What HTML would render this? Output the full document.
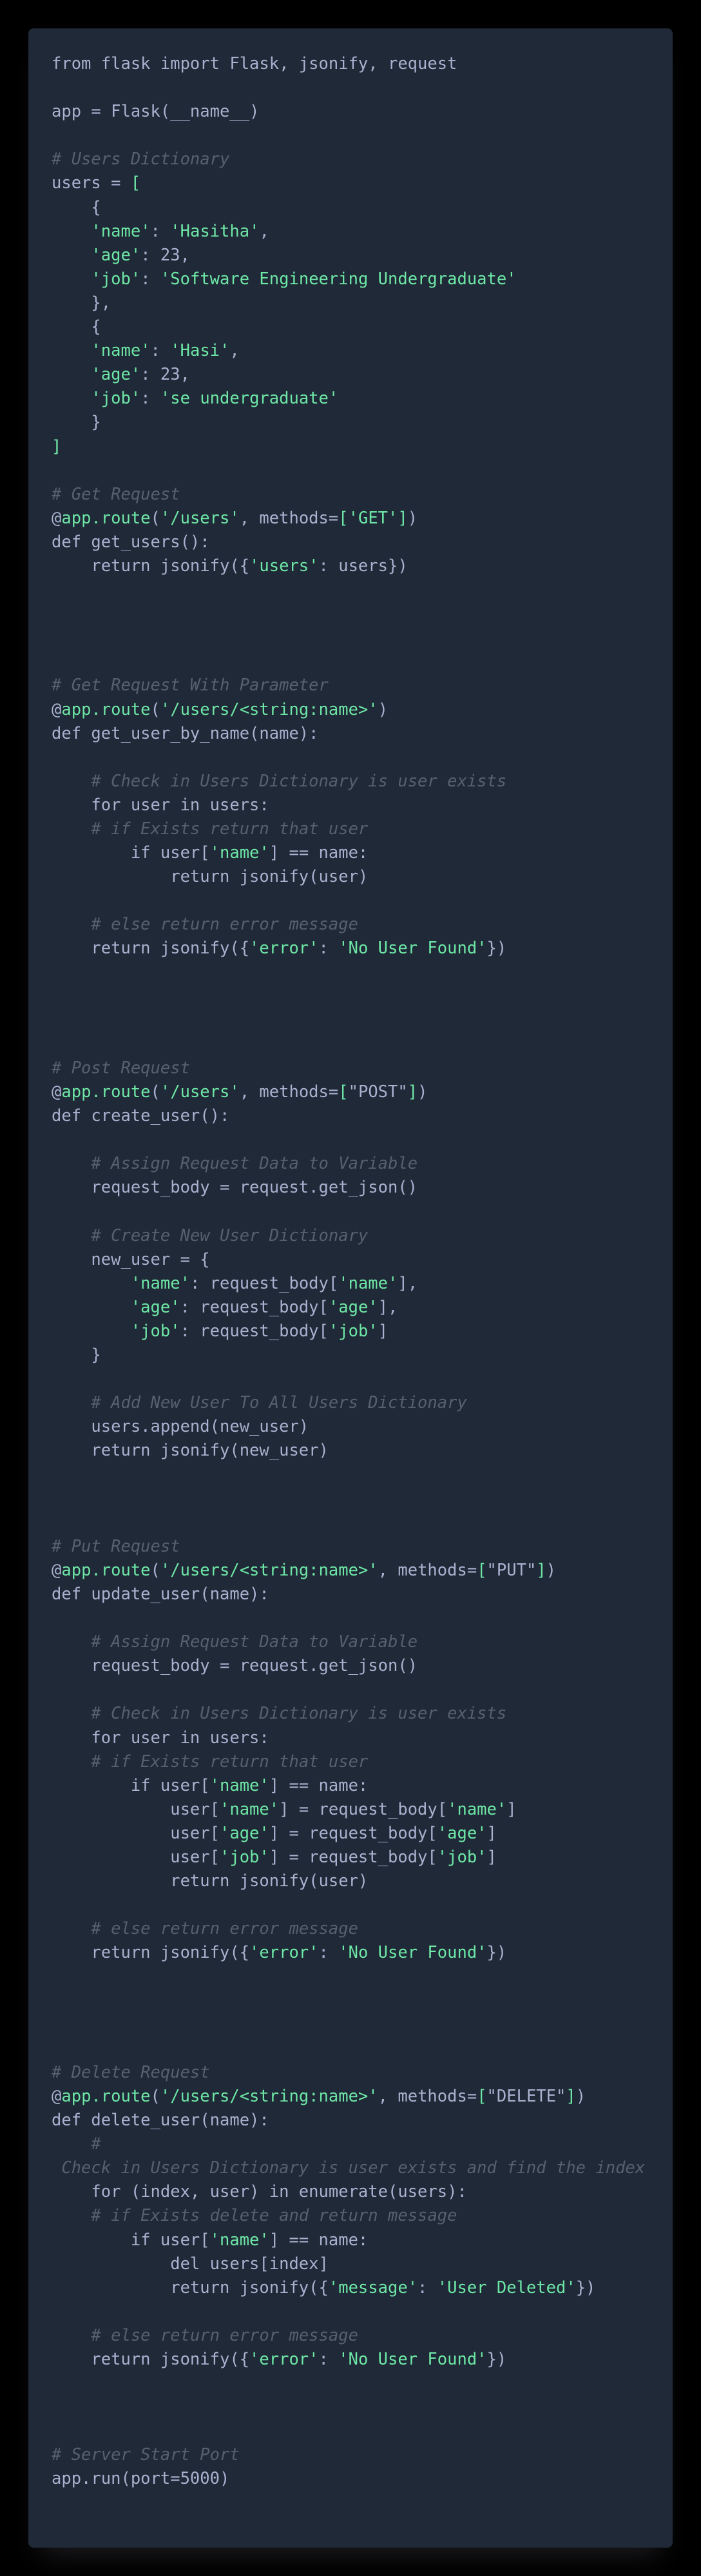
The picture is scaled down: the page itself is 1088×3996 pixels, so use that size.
<!DOCTYPE html>
<html><head><meta charset="utf-8"><style>
html,body{margin:0;padding:0;background:#000;width:1088px;height:3996px;overflow:hidden}
.card{position:absolute;left:44px;top:44px;width:1000px;height:3908px;background:#1f2937;border-radius:8px;box-shadow:0 30px 40px -20px rgba(60,60,70,.5)}
pre{position:absolute;left:36px;top:37px;margin:0;font-family:"DejaVu Sans Mono","Liberation Mono",monospace;font-size:25.5px;line-height:37.1px;color:#a9b1cf;white-space:pre}
.g{color:#6ee7a6}.c{color:#56616f;font-style:italic}
</style></head><body><div class="card"><pre>from flask import Flask, jsonify, request

app = Flask(__name__)

<span class="c"># Users Dictionary</span>
users = <span class="g">[</span>
    {
    <span class="g">'name'</span>: <span class="g">'Hasitha'</span>,
    <span class="g">'age'</span>: 23,
    <span class="g">'job'</span>: <span class="g">'Software Engineering Undergraduate'</span>
    },
    {
    <span class="g">'name'</span>: <span class="g">'Hasi'</span>,
    <span class="g">'age'</span>: 23,
    <span class="g">'job'</span>: <span class="g">'se undergraduate'</span>
    }
<span class="g">]</span>

<span class="c"># Get Request</span>
@<span class="g">app.route</span>(<span class="g">'/users'</span>, methods=<span class="g">[</span><span class="g">'GET'</span><span class="g">]</span>)
def get_users():
    return jsonify({<span class="g">'users'</span>: users})




<span class="c"># Get Request With Parameter</span>
@<span class="g">app.route</span>(<span class="g">'/users/&lt;string:name&gt;'</span>)
def get_user_by_name(name):

    <span class="c"># Check in Users Dictionary is user exists</span>
    for user in users:
    <span class="c"># if Exists return that user</span>
        if user[<span class="g">'name'</span>] == name:
            return jsonify(user)

    <span class="c"># else return error message</span>
    return jsonify({<span class="g">'error'</span>: <span class="g">'No User Found'</span>})




<span class="c"># Post Request</span>
@<span class="g">app.route</span>(<span class="g">'/users'</span>, methods=<span class="g">[</span>"POST"<span class="g">]</span>)
def create_user():

    <span class="c"># Assign Request Data to Variable</span>
    request_body = request.get_json()

    <span class="c"># Create New User Dictionary</span>
    new_user = {
        <span class="g">'name'</span>: request_body[<span class="g">'name'</span>],
        <span class="g">'age'</span>: request_body[<span class="g">'age'</span>],
        <span class="g">'job'</span>: request_body[<span class="g">'job'</span>]
    }

    <span class="c"># Add New User To All Users Dictionary</span>
    users.append(new_user)
    return jsonify(new_user)



<span class="c"># Put Request</span>
@<span class="g">app.route</span>(<span class="g">'/users/&lt;string:name&gt;'</span>, methods=<span class="g">[</span>"PUT"<span class="g">]</span>)
def update_user(name):

    <span class="c"># Assign Request Data to Variable</span>
    request_body = request.get_json()

    <span class="c"># Check in Users Dictionary is user exists</span>
    for user in users:
    <span class="c"># if Exists return that user</span>
        if user[<span class="g">'name'</span>] == name:
            user[<span class="g">'name'</span>] = request_body[<span class="g">'name'</span>]
            user[<span class="g">'age'</span>] = request_body[<span class="g">'age'</span>]
            user[<span class="g">'job'</span>] = request_body[<span class="g">'job'</span>]
            return jsonify(user)

    <span class="c"># else return error message</span>
    return jsonify({<span class="g">'error'</span>: <span class="g">'No User Found'</span>})




<span class="c"># Delete Request</span>
@<span class="g">app.route</span>(<span class="g">'/users/&lt;string:name&gt;'</span>, methods=<span class="g">[</span>"DELETE"<span class="g">]</span>)
def delete_user(name):
    <span class="c">#</span>
<span class="c"> Check in Users Dictionary is user exists and find the index</span>
    for (index, user) in enumerate(users):
    <span class="c"># if Exists delete and return message</span>
        if user[<span class="g">'name'</span>] == name:
            del users[index]
            return jsonify({<span class="g">'message'</span>: <span class="g">'User Deleted'</span>})

    <span class="c"># else return error message</span>
    return jsonify({<span class="g">'error'</span>: <span class="g">'No User Found'</span>})



<span class="c"># Server Start Port</span>
app.run(port=5000)</pre></div></body></html>
